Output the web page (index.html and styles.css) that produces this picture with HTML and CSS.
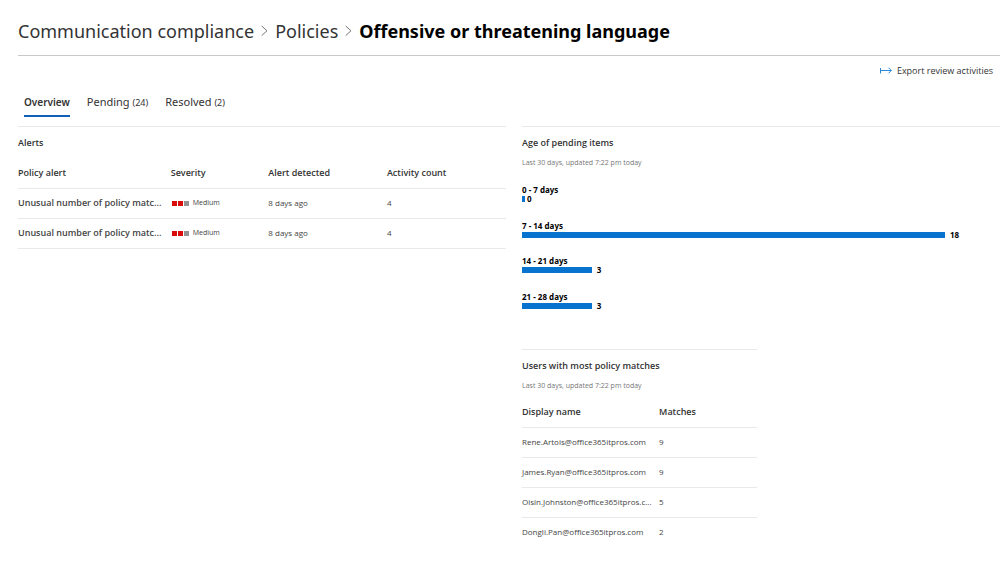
FILE: index.html
```html
<!DOCTYPE html>
<html lang="en">
<head>
<meta charset="utf-8">
<meta name="viewport" content="width=device-width, initial-scale=1">
<title>Offensive or threatening language</title>
<link rel="stylesheet" href="styles.css">
</head>
<body>
<div class="page">
  <header class="header">
    <nav class="breadcrumb" aria-label="Breadcrumb">
      <a class="crumb" href="#">Communication compliance</a>
      <svg class="chevron" viewBox="0 0 7 12" aria-hidden="true"><path d="M.7 1 6 5.800.7 10.600"/></svg>
      <a class="crumb" href="#">Policies</a>
      <svg class="chevron" viewBox="0 0 7 12" aria-hidden="true"><path d="M.7 1 6 5.800.7 10.600"/></svg>
      <h1 class="current">Offensive or threatening language</h1>
    </nav>
  </header>
  <div class="toolbar">
    <button class="export" type="button">
      <svg class="export-icon" viewBox="0 0 12 8" aria-hidden="true"><path d="M.5 1v5.500M.5 3.500h11M8.500 .7 11.300 3.500 8.500 6.300"/></svg>
      Export review activities
    </button>
  </div>
  <div class="tabs" role="tablist">
    <button class="tab tab-active" type="button" role="tab" aria-selected="true">Overview</button>
    <button class="tab" type="button" role="tab" aria-selected="false">Pending <span class="count">(24)</span></button>
    <button class="tab" type="button" role="tab" aria-selected="false">Resolved <span class="count">(2)</span></button>
  </div>
  <main class="panels">
    <section class="panel">
      <h2 class="title">Alerts</h2>
      <table class="table alerts">
        <colgroup><col class="col-policy"><col class="col-severity"><col class="col-detected"><col></colgroup>
        <thead>
          <tr><th>Policy alert</th><th>Severity</th><th>Alert detected</th><th>Activity count</th></tr>
        </thead>
        <tbody>
          <tr>
            <td class="policy">Unusual number of policy matc...</td>
            <td><span class="severity"><i class="level on"></i><i class="level on"></i><i class="level"></i><span class="severity-text">Medium</span></span></td>
            <td>8 days ago</td><td>4</td>
          </tr>
          <tr>
            <td class="policy">Unusual number of policy matc...</td>
            <td><span class="severity"><i class="level on"></i><i class="level on"></i><i class="level"></i><span class="severity-text">Medium</span></span></td>
            <td>8 days ago</td><td>4</td>
          </tr>
        </tbody>
      </table>
    </section>
    <div class="side">
      <section class="panel">
        <h2 class="title">Age of pending items</h2>
        <p class="updated">Last 30 days, updated 7:22 pm today</p>
        <div class="chart">
          <div class="item"><div class="label">0 - 7 days</div><div class="track"><span class="bar bar-empty"></span><span class="value value-empty">0</span></div></div>
          <div class="item"><div class="label">7 - 14 days</div><div class="track"><span class="bar" style="width:88.5%"></span><span class="value">18</span></div></div>
          <div class="item"><div class="label">14 - 21 days</div><div class="track"><span class="bar" style="width:14.6%"></span><span class="value">3</span></div></div>
          <div class="item"><div class="label">21 - 28 days</div><div class="track"><span class="bar" style="width:14.6%"></span><span class="value">3</span></div></div>
        </div>
      </section>
      <section class="panel users">
        <h2 class="title">Users with most policy matches</h2>
        <p class="updated">Last 30 days, updated 7:22 pm today</p>
        <table class="table matches">
          <colgroup><col class="col-name"><col></colgroup>
          <thead><tr><th>Display name</th><th>Matches</th></tr></thead>
          <tbody>
            <tr><td>Rene.Artois@office365itpros.com</td><td>9</td></tr>
            <tr><td>James.Ryan@office365itpros.com</td><td>9</td></tr>
            <tr><td>Oisin.Johnston@office365itpros.c...</td><td>5</td></tr>
            <tr><td>Dongli.Pan@office365itpros.com</td><td>2</td></tr>
          </tbody>
        </table>
      </section>
    </div>
  </main>
</div>
</body>
</html>
```
FILE: styles.css
```css
* { box-sizing: border-box; }
body {
  margin: 0;
  background: #fff;
  color: #333;
  font-family: "Open Sans", "Noto Sans", sans-serif;
  font-size: 8px;
}
button {
  padding: 0;
  border: 0;
  background: none;
  color: inherit;
  font: inherit;
}
h1, h2, p { margin: 0; }
.page { padding-left: 18px; }

.header {
  padding: 16px 0 9px;
  border-bottom: 1px solid #c8c8c8;
}
.breadcrumb {
  display: flex;
  align-items: center;
  gap: 7px;
  font-family: "Noto Sans", "Open Sans", sans-serif;
  font-size: 18px;
  line-height: 30px;
  white-space: nowrap;
}
.crumb { color: #333; text-decoration: none; }
.current { color: #000; font-size: 18px; font-weight: 700; }
.chevron {
  flex: none;
  width: 7px;
  height: 12px;
  fill: none;
  stroke: #777;
}

.toolbar {
  display: flex;
  justify-content: flex-end;
  padding: 7px 7px 0 0;
}
.export {
  display: flex;
  align-items: center;
  gap: 5px;
  font-size: 9px;
  line-height: 16px;
}
.export-icon {
  width: 12px;
  height: 8px;
  fill: none;
  stroke: #2b88d8;
}

.tabs {
  display: flex;
  gap: 17px;
  padding: 14px 0 9px 6px;
  font-family: "Noto Sans", "Open Sans", sans-serif;
}
.tab {
  height: 24px;
  padding-bottom: 4px;
  border-bottom: 2px solid transparent;
  font-size: 11px;
  line-height: 18px;
}
.tab-active { border-color: #1160b7; font-size: 10px; font-weight: 600; }
.count { font-size: 9px; }

.panels {
  display: grid;
  grid-template-columns: 488fr 478fr;
  column-gap: 16px;
  align-items: start;
}
.panel { border-top: 1px solid #e9e9e9; padding-top: 8px; }
.title { font-size: 9px; font-weight: 600; line-height: 16px; }
.updated { padding-top: 6px; color: #777; font-size: 7px; line-height: 12px; }

.table {
  width: 100%;
  border-collapse: collapse;
  table-layout: fixed;
  text-align: left;
}
.table th, .table td {
  height: 30px;
  padding: 0;
  border-bottom: 1px solid #e9e9e9;
  line-height: 16px;
  white-space: nowrap;
}
.table th { font-size: 9px; font-weight: 600; }
.table td { color: #444; }
.alerts { margin-top: 7px; }
.col-policy { width: 31.3%; }
.col-severity { width: 20%; }
.col-detected { width: 24.3%; }
.table .policy { font-size: 9px; font-weight: 600; }
.severity { display: flex; align-items: center; gap: 1px; padding-left: 1px; }
.level { width: 5px; height: 5px; background: #929292; }
.on { background: #d90b0b; }
.severity-text { padding-left: 3px; font-size: 7px; }

.chart {
  display: grid;
  grid-template-rows: repeat(4, 1fr);
  height: 142px;
  margin-top: 15px;
  color: #000;
  font-family: "Noto Sans", "Open Sans", sans-serif;
  font-weight: 700;
}
.label { font-size: 8px; line-height: 12px; }
.track { display: flex; align-items: center; height: 6px; }
.bar { flex: none; height: 6px; background: #0873cf; }
.bar-empty { width: 3px; }
.value { padding-left: 5px; font-size: 8px; line-height: 8px; }
.value-empty { padding-left: 2px; }

.users { width: 49.2%; margin-top: 23px; }
.matches { margin-top: 5px; }
.col-name { width: 58.3%; }
.matches tbody tr:last-child td { border-bottom: 0; }
```
